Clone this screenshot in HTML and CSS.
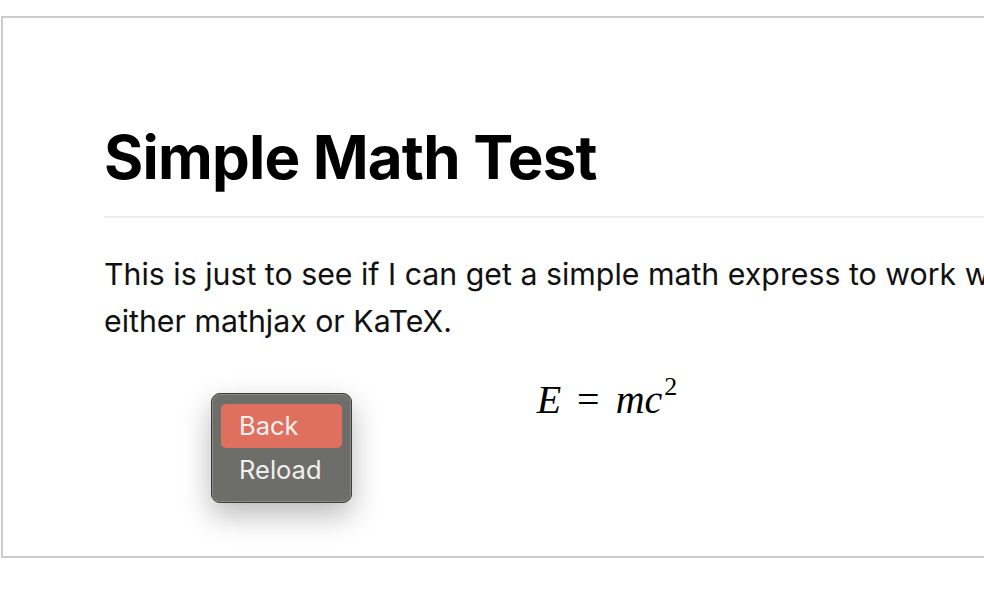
FILE: index.html
```html
<!DOCTYPE html>
<html>
<head>
<meta charset="utf-8">
<link rel="stylesheet" href="styles.css">
</head>
<body>
<div class="frame">
  <div class="doc">
    <h1 class="title">Simple Math Test</h1>
    <p class="para">This is just to see if I can get a simple math express to work with either mathjax or KaTeX.</p>
    <div class="math"><span class="mi">E</span><span class="mo">=</span><span class="mi">m</span><span class="mi">c</span><sup class="sup">2</sup></div>
  </div>
  <div class="menu">
    <div class="item active">Back</div>
    <div class="item">Reload</div>
  </div>
</div>
</body>
</html>
```
FILE: styles.css
```css
html, body {
  margin: 0;
  padding: 0;
  background: #ffffff;
  overflow: hidden;
  width: 984px;
  height: 604px;
}
body {
  padding-top: 16px;
  padding-left: 1px;
  box-sizing: border-box;
}
.frame {
  position: relative;
  width: 1300px;
  height: 538px;
  border: 2px solid #cccccc;
  background: #fff;
  overflow: hidden;
}
.doc {
  width: 1006px;
  padding: 103px 0 0 101px;
  font-family: Inter, "Noto Sans", sans-serif;
  color: #111;
}
.title {
  margin: 0;
  font-size: 60px;
  font-weight: 700;
  line-height: 72px;
  letter-spacing: -0.8px;
  padding-bottom: 23px;
  border-bottom: 2px solid #eaebef;
  color: #000;
}
.para {
  max-width: 930px;
  margin: 33px 0 0 0;
  font-size: 30.3px;
  line-height: 47px;
  color: #111;
}
.math {
  margin-top: 31px;
  text-align: center;
  font-family: "Liberation Serif", "DejaVu Serif", serif;
  font-size: 40px;
  line-height: 47px;
  color: #000;
}
.mi {
  font-style: italic;
}
.mo {
  padding: 0 16px;
}
.sup {
  font-size: 26px;
  vertical-align: 18px;
  line-height: 0;
  margin-left: 2px;
}
.menu {
  position: absolute;
  left: 208px;
  top: 375px;
  width: 121px;
  padding: 10px 9px;
  background: #6d6d69;
  border: 1px solid #3c3c3a;
  box-shadow: inset 0 0 0 1px #8a8a86, 0 12px 30px rgba(0,0,0,0.28);
  border-radius: 9px;
  font-family: Inter, "Noto Sans", sans-serif;
  font-size: 25.5px;
  color: #f2f0ec;
}
.item {
  height: 44px;
  line-height: 44px;
  padding-left: 18px;
  border-radius: 5px;
}
.item.active {
  background: #df7060;
}
```
